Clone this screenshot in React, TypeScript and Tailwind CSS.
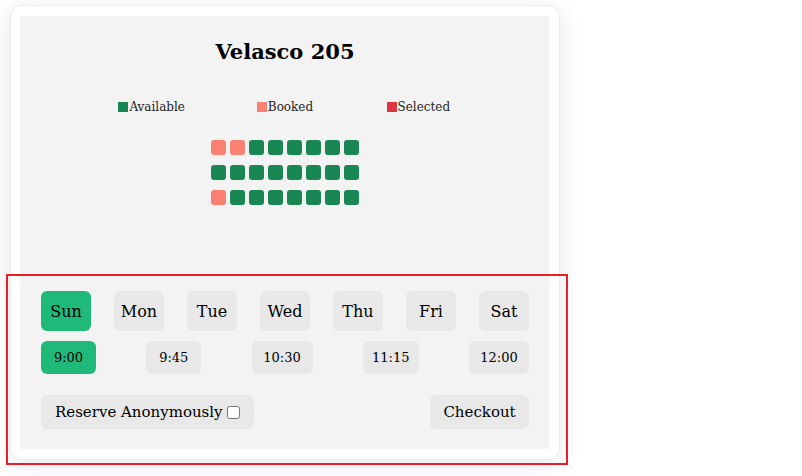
const days = ["Sun", "Mon", "Tue", "Wed", "Thu", "Fri", "Sat"];
const times = [
  { t: "9:00", w: "w-[55px]" },
  { t: "9:45", w: "w-[55px]" },
  { t: "10:30", w: "w-[61px]" },
  { t: "11:15", w: "w-[56px]" },
  { t: "12:00", w: "w-[60px]" },
];

// 0 = available, 1 = booked
const seats = [
  [1, 1, 0, 0, 0, 0, 0, 0],
  [0, 0, 0, 0, 0, 0, 0, 0],
  [1, 0, 0, 0, 0, 0, 0, 0],
];

function Legend({ color, label }: { color: string; label: string }) {
  return (
    <div className="flex items-center justify-center gap-[1px]">
      <span className={`inline-block w-[10px] h-[10px] ${color}`} />
      <span className="text-[12px] leading-[16px] text-[#222]">{label}</span>
    </div>
  );
}

export default function App() {
  return (
    <div
      className="relative w-[802px] h-[476px] bg-white text-black"
      style={{ fontFamily: '"DejaVu Serif", "Liberation Serif", serif' }}
    >
      <div className="absolute left-[6px] top-[274px] w-[562px] h-[191px] border-2 border-[#e81e28] pointer-events-none z-10" />
      <div className="pl-[10px] pt-[5px]">
        <div className="w-[550px] rounded-xl border border-[#ececec] bg-white pt-[10px] pb-[10px] pl-[9px] pr-[10px] shadow-[0_4px_24px_rgba(0,0,0,0.10)]">
          <div className="bg-[#f3f3f3] pl-[21px] pr-[20px] pt-[20px] pb-[20px] flex flex-col">
            <h2 className="text-center text-[21px] leading-[32px] font-bold">Velasco 205</h2>
            <div className="mt-[31px] mx-auto w-[400px] grid grid-cols-3">
              <Legend color="bg-[#198754]" label="Available" />
              <Legend color="bg-[#fa8072]" label="Booked" />
              <Legend color="bg-[#dc3545]" label="Selected" />
            </div>
            <div className="mt-[25px] mx-auto flex flex-col gap-[10px]">
              {seats.map((row, i) => (
                <div key={i} className="flex gap-[4px]">
                  {row.map((s, j) => (
                    <div
                      key={j}
                      className={`w-[15px] h-[15px] rounded-[3px] ${s ? "bg-[#fa8072]" : "bg-[#198754]"}`}
                    />
                  ))}
                </div>
              ))}
            </div>
            <div className="mt-[86px] flex justify-between">
              {days.map((d, i) => (
                <button
                  key={d}
                  className={`w-[50px] h-[40px] pt-[2px] rounded-md text-[16px] ${i === 0 ? "bg-[#1fba7a]" : "bg-[#e8e8e8]"}`}
                >
                  {d}
                </button>
              ))}
            </div>
            <div className="mt-[10px] flex justify-between">
              {times.map(({ t, w }, i) => (
                <button
                  key={t}
                  className={`h-[33px] rounded-md text-[13px] ${w} ${i === 0 ? "bg-[#1fba7a]" : "bg-[#e8e8e8]"}`}
                >
                  {t}
                </button>
              ))}
            </div>
            <div className="mt-[21px] flex justify-between">
              <button className="h-[34px] px-[14px] rounded-md bg-[#e8e8e8] text-[15px] flex items-center gap-[4px]">
                Reserve Anonymously
                <input type="checkbox" className="w-[13px] h-[13px]" />
              </button>
              <button className="h-[34px] w-[99px] rounded-md bg-[#e8e8e8] text-[15px]">Checkout</button>
            </div>
          </div>
        </div>
      </div>
    </div>
  );
}
